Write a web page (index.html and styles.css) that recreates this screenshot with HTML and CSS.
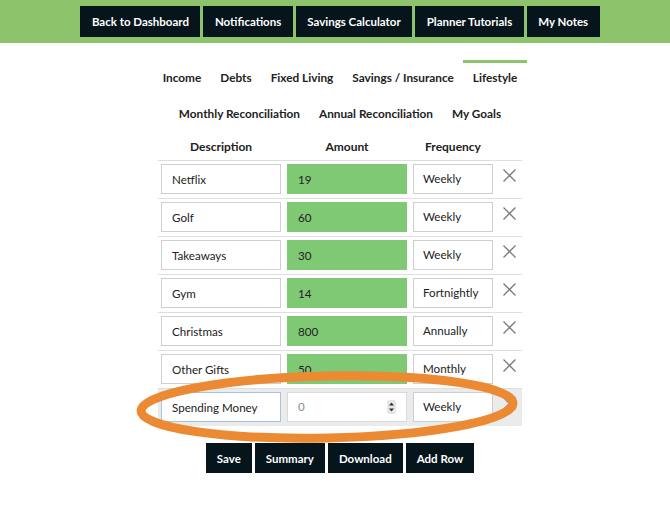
FILE: index.html
```html
<!DOCTYPE html>
<html lang="en">
<head>
<meta charset="utf-8">
<title>Lifestyle</title>
<link rel="stylesheet" href="styles.css">
</head>
<body>
<header class="topbar">
  <nav class="topnav">
    <a class="dark-btn top-btn" href="#">Back to Dashboard</a>
    <a class="dark-btn top-btn" href="#">Notifications</a>
    <a class="dark-btn top-btn" href="#">Savings Calculator</a>
    <a class="dark-btn top-btn" href="#">Planner Tutorials</a>
    <a class="dark-btn top-btn" href="#">My Notes</a>
  </nav>
</header>
<main class="content">
  <nav class="tabs">
    <ul class="tab-row">
      <li class="tab">Income</li>
      <li class="tab">Debts</li>
      <li class="tab">Fixed Living</li>
      <li class="tab">Savings / Insurance</li>
      <li class="tab active">Lifestyle</li>
    </ul>
    <ul class="tab-row">
      <li class="tab">Monthly Reconciliation</li>
      <li class="tab">Annual Reconciliation</li>
      <li class="tab">My Goals</li>
    </ul>
  </nav>
  <table class="budget">
    <colgroup>
      <col class="c-desc"><col class="c-amt"><col class="c-freq"><col class="c-del">
    </colgroup>
    <thead>
      <tr><th>Description</th><th>Amount</th><th>Frequency</th><th></th></tr>
    </thead>
    <tbody>
      <tr>
        <td><input class="field" value="Netflix"></td>
        <td><input class="field amount" value="19"></td>
        <td><div class="field select">Weekly</div></td>
        <td class="del"><svg class="x" viewBox="0 0 13 13"><path d="M0.5 0.5L12.5 12.5M12.5 0.5L0.5 12.5"/></svg></td>
      </tr>
      <tr>
        <td><input class="field" value="Golf"></td>
        <td><input class="field amount" value="60"></td>
        <td><div class="field select">Weekly</div></td>
        <td class="del"><svg class="x" viewBox="0 0 13 13"><path d="M0.5 0.5L12.5 12.5M12.5 0.5L0.5 12.5"/></svg></td>
      </tr>
      <tr>
        <td><input class="field" value="Takeaways"></td>
        <td><input class="field amount" value="30"></td>
        <td><div class="field select">Weekly</div></td>
        <td class="del"><svg class="x" viewBox="0 0 13 13"><path d="M0.5 0.5L12.5 12.5M12.5 0.5L0.5 12.5"/></svg></td>
      </tr>
      <tr>
        <td><input class="field" value="Gym"></td>
        <td><input class="field amount" value="14"></td>
        <td><div class="field select">Fortnightly</div></td>
        <td class="del"><svg class="x" viewBox="0 0 13 13"><path d="M0.5 0.5L12.5 12.5M12.5 0.5L0.5 12.5"/></svg></td>
      </tr>
      <tr>
        <td><input class="field" value="Christmas"></td>
        <td><input class="field amount" value="800"></td>
        <td><div class="field select">Annually</div></td>
        <td class="del"><svg class="x" viewBox="0 0 13 13"><path d="M0.5 0.5L12.5 12.5M12.5 0.5L0.5 12.5"/></svg></td>
      </tr>
      <tr>
        <td><input class="field" value="Other Gifts"></td>
        <td><input class="field amount" value="50"></td>
        <td><div class="field select">Monthly</div></td>
        <td class="del"><svg class="x" viewBox="0 0 13 13"><path d="M0.5 0.5L12.5 12.5M12.5 0.5L0.5 12.5"/></svg></td>
      </tr>
      <tr class="editing">
        <td><input class="field focused" value="Spending Money"></td>
        <td>
          <div class="field number">
            <span class="placeholder">0</span>
            <svg class="spin" viewBox="0 0 9 14"><rect x="0" y="0" width="9" height="14" rx="2"/><path class="arr" d="M4.5 2.5L7 5.5H2Z M4.5 11.5L7 8.5H2Z"/></svg>
          </div>
        </td>
        <td><div class="field select">Weekly</div></td>
        <td class="del"><svg class="x" viewBox="0 0 13 13"><path d="M0.5 0.5L12.5 12.5M12.5 0.5L0.5 12.5"/></svg></td>
      </tr>
    </tbody>
  </table>
  <div class="actions">
    <a class="dark-btn act-btn" href="#">Save</a>
    <a class="dark-btn act-btn" href="#">Summary</a>
    <a class="dark-btn act-btn" href="#">Download</a>
    <a class="dark-btn act-btn" href="#">Add Row</a>
  </div>
</main>
<svg class="annotation" viewBox="0 0 670 527" width="670" height="527">
  <ellipse cx="327" cy="407" rx="186" ry="31" transform="rotate(-1.2 327 407)"/>
</svg>
</body>
</html>
```
FILE: styles.css
```css
* { box-sizing: border-box; }
html, body { margin: 0; padding: 0; }
body {
  font-family: Lato, "Open Sans", Arial, sans-serif;
  font-size: 11.6px;
  color: #222;
  background: #fff;
  width: 670px;
  height: 527px;
  position: relative;
  overflow: hidden;
}
.topbar {
  background: #8dc46b;
  height: 43px;
  padding: 6px 0 0 10px;
}
.topnav {
  display: flex;
  justify-content: center;
  gap: 3px;
}
.dark-btn {
  background: #06141b;
  color: #fff;
  text-decoration: none;
  font-weight: 700;
  font-size: 11.5px;
  display: flex;
  align-items: center;
  justify-content: center;
}
.top-btn {
  height: 31px;
  padding: 0 11.5px;
}
.content {
  padding-left: 10px;
}
.tabs {
  margin-top: 17px;
}
.tab-row {
  list-style: none;
  margin: 0;
  padding: 0;
  display: flex;
  justify-content: center;
}
.tab {
  border-top: 3px solid transparent;
  padding: 6px 9.5px 9px;
  line-height: 18px;
  font-size: 11.8px;
  font-weight: 700;
  color: #222;
}
.tab.active {
  border-top-color: #8dc46b;
}
.budget {
  border-collapse: collapse;
  width: 364px;
  margin: 0 auto;
  table-layout: fixed;
}
.c-desc { width: 126px; }
.c-amt { width: 126px; }
.c-freq { width: 86px; }
.c-del { width: 26px; }
.budget th {
  font-weight: 700;
  font-size: 12px;
  line-height: 18px;
  padding: 6px 3px 4px;
  text-align: center;
}
.budget td {
  border-top: 1px solid #dedede;
  padding: 3px 3px 4px;
  vertical-align: top;
}
.field {
  display: block;
  width: 100%;
  height: 30px;
  border: 1px solid #cfcfcf;
  background: #fff;
  padding: 0 10px;
  font: inherit;
  color: #222;
  line-height: 28px;
  margin: 0;
  outline: none;
}
.amount {
  background: #7fc974;
  border-color: #7fc974;
}
.select {
  padding-left: 9px;
}
.del {
  text-align: center;
}
.budget td.del {
  padding-top: 8px;
}
.x {
  width: 13px;
  height: 13px;
  display: block;
  margin: 0 auto;
  fill: none;
  stroke: #7a7a7a;
  stroke-width: 1.3;
}
.editing td {
  background: #ebebeb;
}
.focused {
  border-color: #a9c1e6;
}
.number {
  display: flex;
  align-items: center;
  justify-content: space-between;
  border-color: #dadada;
  padding-right: 10px;
}
.placeholder {
  color: #8a8a8a;
}
.spin {
  width: 9px;
  height: 14px;
}
.spin rect { fill: #e6e6e6; }
.spin .arr { fill: #333; }
.actions {
  display: flex;
  justify-content: center;
  gap: 3px;
  margin-top: 17px;
}
.act-btn {
  height: 30px;
  padding: 0 11px;
}
.annotation {
  position: absolute;
  left: 0;
  top: 0;
  pointer-events: none;
}
.annotation ellipse {
  fill: none;
  stroke: #ec8a34;
  stroke-width: 9;
}
```
